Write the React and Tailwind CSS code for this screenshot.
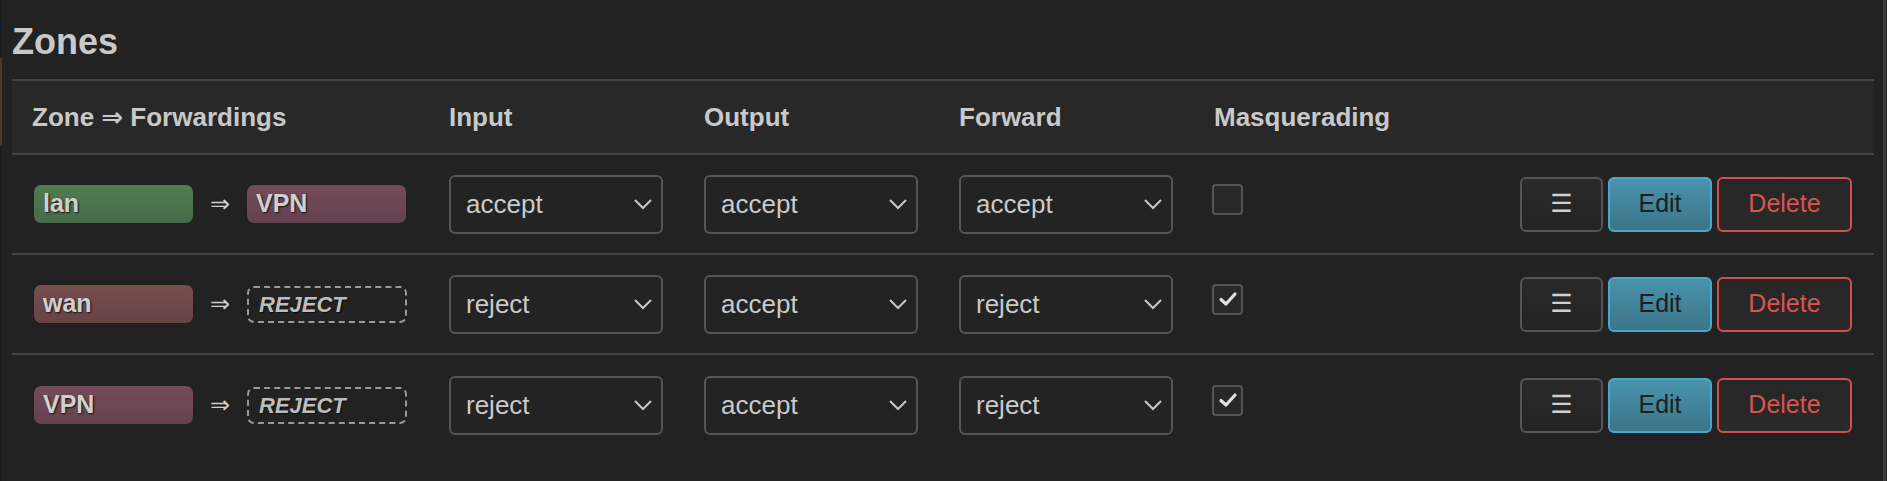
const zones = [
  { name: "lan", color: "green", target: { name: "VPN", color: "vpn" }, input: "accept", output: "accept", forward: "accept", masq: false },
  { name: "wan", color: "wan", target: null, input: "reject", output: "accept", forward: "reject", masq: true },
  { name: "VPN", color: "vpn", target: null, input: "reject", output: "accept", forward: "reject", masq: true },
];

const pillColors = {
  green: "bg-linear-to-b from-[#507d52] to-[#466a48]",
  vpn: "bg-linear-to-b from-[#764b58] to-[#634250]",
  wan: "bg-linear-to-b from-[#774e4e] to-[#654446]",
};

const Pill = ({ name, color }) => (
  <div
    className={`flex h-[38px] w-[159px] items-center rounded-[7px] pl-[9px] text-[25px] font-bold text-[#d0d0d0] [text-shadow:1px_1px_2px_rgba(0,0,0,0.8)] ${pillColors[color]}`}
  >
    {name}
  </div>
);

const Reject = () => (
  <div className="flex h-[37px] w-[160px] items-center rounded-[7px] border-2 border-dashed border-[#9a9a9a] pl-[10px] text-[22px] font-bold italic text-[#bdbdbd] [text-shadow:1px_1px_1px_rgba(0,0,0,0.6)]">
    REJECT
  </div>
);

const Select = ({ value }) => (
  <div className="flex h-[59px] w-[214px] items-center justify-between rounded-[6px] border-2 border-[#555] bg-[#232323] pl-[15px] pr-[8px] text-[26px] text-[#cacaca]">
    <span>{value}</span>
    <svg width="20" height="12" viewBox="0 0 20 12" fill="none">
      <path d="M2 2 L10 10 L18 2" stroke="#c8c8c8" strokeWidth="2" />
    </svg>
  </div>
);

const Checkbox = ({ checked }) => (
  <div className="flex h-[31px] w-[31px] items-center justify-center rounded-[4px] border-2 border-[#555] bg-[#282828]">
    {checked && (
      <svg width="20" height="16" viewBox="0 0 20 16" fill="none">
        <path d="M3 8.5 L8 13 L17 3" stroke="#e0e0e0" strokeWidth="3.2" strokeLinecap="round" strokeLinejoin="round" />
      </svg>
    )}
  </div>
);

const Actions = () => (
  <div className="flex items-center justify-end gap-[5px] pr-[22px] text-[25px]">
    <button className="flex h-[55px] w-[83px] items-center justify-center rounded-[6px] border-2 border-[#555] bg-linear-to-b from-[#2a2a2a] to-[#232323] text-[#d0d0d0]">
      ☰
    </button>
    <button className="flex h-[55px] w-[104px] items-center justify-center rounded-[6px] border-2 border-[#4ba7c9] bg-linear-to-b from-[#4a93ad] to-[#3b7589] text-[#1e1e1e]">
      Edit
    </button>
    <button className="flex h-[55px] w-[135px] items-center justify-center rounded-[6px] border-2 border-[#d24f4f] bg-linear-to-b from-[#262626] to-[#2a2a2a] text-[#d9534f]">
      Delete
    </button>
  </div>
);

const cols = "grid grid-cols-[417px_255px_255px_255px_1fr]";

export default function App() {
  return (
    <div
      className="relative h-[481px] w-full overflow-hidden bg-[#222] pl-[12px] pr-[13px]"
      style={{ fontFamily: '"Liberation Sans", "DejaVu Sans", Arial, sans-serif' }}
    >
      <div className="absolute left-0 top-0 h-full w-[2px] bg-[#1b1b1b]" />
      <div className="absolute left-0 top-[58px] h-[88px] w-[2px] bg-[#4a3a2c]" />
      <div className="absolute right-[1px] top-0 h-full w-[3px] bg-[#3b3b3b]" />

      <h3 className="pt-[24px] text-[36px] font-bold leading-[36px] text-[#c8c8c8]">Zones</h3>

      <div className="mt-[19px]">
        <div className={`${cols} h-[76px] items-center border-y-2 border-[#444] bg-[#282828] text-[26px] font-bold text-[#c9c9c9]`}>
          <div className="pl-[20px]">Zone ⇒ Forwardings</div>
          <div className="pl-[20px]">Input</div>
          <div className="pl-[20px]">Output</div>
          <div className="pl-[20px]">Forward</div>
          <div className="pl-[20px]">Masquerading</div>
        </div>

        {zones.map((z, i) => (
          <div
            key={z.name}
            className={`${cols} h-[100px] items-center ${i < zones.length - 1 ? "border-b-2 border-[#444]" : ""}`}
          >
            <div className="flex items-center pl-[22px]">
              <Pill name={z.name} color={z.color} />
              <span className="w-[54px] text-center text-[24px] text-[#cfcfcf]">⇒</span>
              {z.target ? <Pill name={z.target.name} color={z.target.color} /> : <Reject />}
            </div>
            <div className="pl-[20px]">
              <Select value={z.input} />
            </div>
            <div className="pl-[20px]">
              <Select value={z.output} />
            </div>
            <div className="pl-[20px]">
              <Select value={z.forward} />
            </div>
            <div className="flex items-center justify-between">
              <div className="mb-[10px] pl-[18px]">
                <Checkbox checked={z.masq} />
              </div>
              <Actions />
            </div>
          </div>
        ))}
      </div>
    </div>
  );
}
